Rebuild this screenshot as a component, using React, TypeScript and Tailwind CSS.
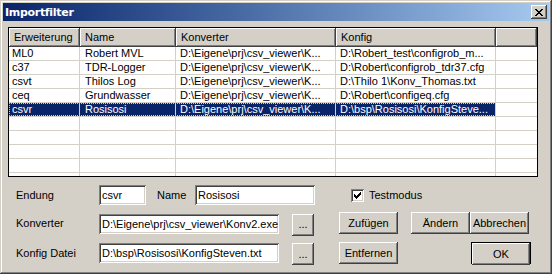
import React from 'react';

const FONT = "font-['Liberation_Sans',Arial,sans-serif]";
const RAISED = 'bg-[#d4d0c8] shadow-[inset_-1px_-1px_#404040,inset_1px_1px_#ffffff,inset_-2px_-2px_#808080]';
const SUNKEN = 'bg-white shadow-[inset_1px_1px_#808080,inset_-1px_-1px_#ffffff,inset_2px_2px_#404040,inset_-2px_-2px_#d4d0c8]';

type Row = { ext: string; name: string; conv: string; cfg: string; selected?: boolean };

const rows: Row[] = [
  { ext: 'ML0', name: 'Robert MVL', conv: 'D:\\Eigene\\prj\\csv_viewer\\K...', cfg: 'D:\\Robert_test\\configrob_m...' },
  { ext: 'c37', name: 'TDR-Logger', conv: 'D:\\Eigene\\prj\\csv_viewer\\K...', cfg: 'D:\\Robert\\configrob_tdr37.cfg' },
  { ext: 'csvt', name: 'Thilos Log', conv: 'D:\\Eigene\\prj\\csv_viewer\\K...', cfg: 'D:\\Thilo 1\\Konv_Thomas.txt' },
  { ext: 'ceq', name: 'Grundwasser', conv: 'D:\\Eigene\\prj\\csv_viewer\\K...', cfg: 'D:\\Robert\\configeq.cfg' },
  { ext: 'csvr', name: 'Rosisosi', conv: 'D:\\Eigene\\prj\\csv_viewer\\K...', cfg: 'D:\\bsp\\Rosisosi\\KonfigSteve...', selected: true },
];

// pixel glyphs, one string per row
const CLOSE_X = ['11....11', '.11..11.', '..1111..', '...11...', '..1111..', '.11..11.', '11....11'];
const CHECK = ['......1', '.....11', '1...111', '11.111.', '11111..', '.111...', '..1....'];

const Pixels = ({ map }: { map: string[] }) => (
  <svg width={map[0].length} height={map.length} shapeRendering="crispEdges">
    {map.map((line, y) =>
      line.split('').map((c, x) => (c === '1' ? <rect key={`${x}-${y}`} x={x} y={y} width={1} height={1} fill="#000" /> : null))
    )}
  </svg>
);

const Button = ({ label, className = '' }: { label: string; className?: string }) => (
  <div className={`${RAISED} h-[22px] flex items-center justify-center text-[11px] text-black ${className}`}>{label}</div>
);

const Field = ({ value, className = '' }: { value: string; className?: string }) => (
  <div className={`${SUNKEN} h-[20px] pl-[3px] flex items-center overflow-hidden whitespace-nowrap text-[11px] text-black ${className}`}>
    {value}
  </div>
);

const App: React.FC = () => {
  return (
    <div className={`${FONT} w-[552px] h-[274px] p-[3px] flex flex-col bg-[#d4d0c8] shadow-[inset_-1px_-1px_#404040,inset_1px_1px_#d4d0c8,inset_-2px_-2px_#808080,inset_2px_2px_#ffffff]`}>
      {/* title bar */}
      <div className="h-[18px] flex items-center justify-between pl-[2px] pr-[2px] bg-gradient-to-r from-[#0a246a] to-[#a6caf0]">
        <span className="font-['DejaVu_Sans',sans-serif] font-bold text-[11px] tracking-[-0.3px] text-white leading-none">Importfilter</span>
        <div className={`${RAISED} w-[16px] h-[14px] flex items-center justify-center`}>
          <Pixels map={CLOSE_X} />
        </div>
      </div>

      <div className="pl-[5px] pt-[6px] flex flex-col">
        {/* list view */}
        <div className="w-[530px] h-[150px] border border-black bg-white overflow-hidden text-[11px] leading-[13px] text-black">
          <div className="flex h-[19px]">
            {['Erweiterung', 'Name', 'Konverter', 'Konfig'].map((h, i) => (
              <div
                key={h}
                className={`${RAISED} flex items-center ${i === 0 ? 'w-[71px] pl-[5px]' : i === 1 ? 'w-[96px] pl-[5px]' : 'w-[160px] pl-[5px]'}`}
              >
                {h}
              </div>
            ))}
            <div className={`${RAISED} flex-1`} />
          </div>
          {rows.map((r) => (
            <div key={r.ext} className="flex h-[14px] border-b border-[#d4d0c8] whitespace-nowrap">
              <div
                className={`flex ${r.selected ? 'bg-[#0a246a] text-white outline outline-1 outline-dotted outline-[#d8d090] -outline-offset-1' : ''}`}
              >
                <div className="w-[71px] pl-[3px] border-r border-[#d4d0c8] overflow-hidden">{r.ext}</div>
                <div className="w-[96px] pl-[5px] border-r border-[#d4d0c8] overflow-hidden">{r.name}</div>
                <div className="w-[160px] pl-[4px] border-r border-[#d4d0c8] overflow-hidden">{r.conv}</div>
                <div className="w-[160px] pl-[4px] border-r border-[#d4d0c8] overflow-hidden">{r.cfg}</div>
              </div>
              <div className="flex-1" />
            </div>
          ))}
          {Array.from({ length: 5 }).map((_, i) => (
            <div key={i} className="flex h-[14px] border-b border-[#d4d0c8]">
              <div className="w-[71px] border-r border-[#d4d0c8]" />
              <div className="w-[96px] border-r border-[#d4d0c8]" />
              <div className="w-[160px] border-r border-[#d4d0c8]" />
              <div className="w-[160px] border-r border-[#d4d0c8]" />
            </div>
          ))}
        </div>

        {/* form */}
        <div className="mt-[8px] flex items-center h-[20px] text-[11px] text-black">
          <span className="ml-[8px] w-[83px]">Endung</span>
          <Field value="csvr" className="w-[47px]" />
          <span className="ml-[11px] w-[38px]">Name</span>
          <Field value="Rosisosi" className="w-[120px]" />
          <div className={`${SUNKEN} ml-[36px] w-[13px] h-[13px] flex items-center justify-center`}>
            <Pixels map={CHECK} />
          </div>
          <span className="ml-[5px]">Testmodus</span>
        </div>

        <div className="mt-[7px] flex items-center h-[22px] text-[11px] text-black">
          <span className="ml-[8px] w-[83px]">Konverter</span>
          <Field value="D:\Eigene\prj\csv_viewer\Konv2.exe" className="w-[180px] mt-[2px]" />
          <Button label="..." className="ml-[13px] w-[22px] mt-[3px]" />
          <Button label="Zufügen" className="ml-[25px] w-[59px]" />
          <Button label="Ändern" className="ml-[13px] w-[59px]" />
          <Button label="Abbrechen" className="w-[59px]" />
        </div>

        <div className="mt-[8px] flex items-center h-[22px] text-[11px] text-black">
          <span className="ml-[8px] w-[83px]">Konfig Datei</span>
          <Field value="D:\bsp\Rosisosi\KonfigSteven.txt" className="w-[180px]" />
          <Button label="..." className="ml-[13px] w-[22px] mt-[2px]" />
          <Button label="Entfernen" className="ml-[25px] w-[59px]" />
          <div className="ml-[73px] w-[60px] h-[22px] border border-black">
            <Button label="OK" className="w-full h-[20px]" />
          </div>
        </div>
      </div>
    </div>
  );
};

export default App;
